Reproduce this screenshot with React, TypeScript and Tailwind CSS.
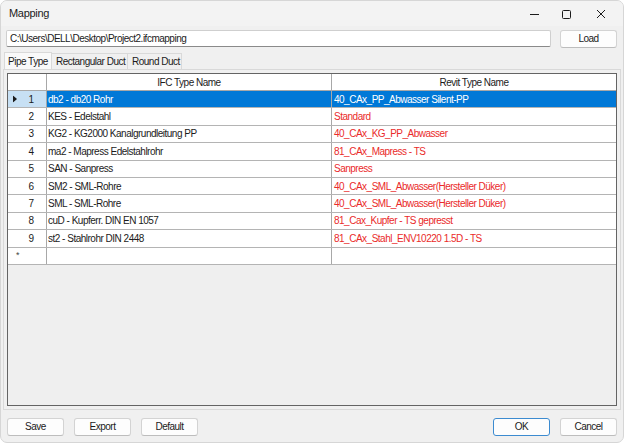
import React from 'react';

const rows = [
  { ifc: 'db2 - db20 Rohr', revit: '40_CAx_PP_Abwasser Silent-PP' },
  { ifc: 'KES - Edelstahl', revit: 'Standard' },
  { ifc: 'KG2 - KG2000 Kanalgrundleitung PP', revit: '40_CAx_KG_PP_Abwasser' },
  { ifc: 'ma2 - Mapress Edelstahlrohr', revit: '81_CAx_Mapress - TS' },
  { ifc: 'SAN - Sanpress', revit: 'Sanpress' },
  { ifc: 'SM2 - SML-Rohre', revit: '40_CAx_SML_Abwasser(Hersteller Düker)' },
  { ifc: 'SML - SML-Rohre', revit: '40_CAx_SML_Abwasser(Hersteller Düker)' },
  { ifc: 'cuD - Kupferr. DIN EN 1057', revit: '81_Cax_Kupfer - TS gepresst' },
  { ifc: 'st2 - Stahlrohr DIN 2448', revit: '81_CAx_Stahl_ENV10220 1.5D - TS' },
];

const Button = ({ label, primary = false }: { label: string; primary?: boolean }) => (
  <button
    className={`block h-[18px] w-[57px] rounded-[3px] border bg-[#fdfdfd] text-[10px] leading-none text-[#1b1b1b] ${
      primary ? 'border-[#3c8bd0]' : 'border-[#d3d3d3] border-b-[#bdbdbd]'
    }`}
  >
    {label}
  </button>
);

const App = () => {
  return (
    <div
      className="w-[624px] h-[444px] bg-white tracking-[-0.5px]"
      style={{ fontFamily: '"Liberation Sans", Arial, sans-serif' }}
    >
      <div className="h-[443px] rounded-[7px] border border-[#d6d6d6] bg-[#f0f0f0] overflow-hidden flex flex-col">
        {/* Title bar */}
        <div className="h-[25px] flex items-center bg-[#f3f3f3] pl-[8px]">
          <span className="text-[11px] text-[#1b1b1b] tracking-[-0.3px]">Mapping</span>
          <div className="ml-auto flex items-center h-full">
            <div className="w-[34px] h-full flex items-center justify-center pl-[4px]">
              <svg width="9" height="10" viewBox="0 0 9 10">
                <line x1="0" y1="5.5" x2="9" y2="5.5" stroke="#1b1b1b" strokeWidth="1" />
              </svg>
            </div>
            <div className="w-[34px] h-full flex items-center justify-center">
              <svg width="10" height="10" viewBox="0 0 10 10">
                <rect x="1.5" y="1.5" width="8" height="8" rx="1" fill="none" stroke="#1b1b1b" strokeWidth="1" />
              </svg>
            </div>
            <div className="w-[40px] h-full flex items-center justify-center pr-[4px]">
              <svg width="10" height="10" viewBox="0 0 10 10">
                <path d="M1 1 L9 9 M9 1 L1 9" stroke="#1b1b1b" strokeWidth="1" />
              </svg>
            </div>
          </div>
        </div>

        {/* Path row */}
        <div className="flex items-start h-[18px] mt-[4px] pl-[5px] pr-[6px]">
          <div className="w-[545px] h-[17px] bg-white border border-[#cfcfcf] border-b-[#8a8a8a] rounded-[2px] flex items-center pl-[3px] text-[10px] text-[#1b1b1b]">
            C:\Users\DELL\Desktop\Project2.ifcmapping
          </div>
          <div className="ml-auto flex">
            <Button label="Load" />
          </div>
        </div>

        {/* Tabs */}
        <div className="flex items-end mt-[4px] pl-[3px] h-[17px] text-[10px] text-[#1b1b1b]">
          <div className="h-[17px] w-[48px] bg-[#f9f9f9] border border-b-0 border-[#d9d9d9] flex items-center pl-[3px]">
            Pipe Type
          </div>
          <div className="h-[16px] w-[76px] border-t border-r border-[#d9d9d9] flex items-center pl-[4px]">
            Rectangular Duct
          </div>
          <div className="h-[16px] w-[54px] border-t border-r border-[#d9d9d9] flex items-center pl-[4px]">
            Round Duct
          </div>
        </div>

        {/* Tab page */}
        <div className="mx-[2px] h-[341px] border border-[#d9d9d9] bg-[#f0f0f0] p-[3px]">
          <div className="h-[333px] border border-[#646464] bg-[#efefef] text-[10px]">
            {/* Header */}
            <div className="flex h-[17px] bg-white border-b border-[#a8a8a8]">
              <div className="w-[39px] border-r border-[#a8a8a8]" />
              <div className="w-[285px] border-r border-[#a8a8a8] flex items-center justify-center text-[#1b1b1b]">
                IFC Type Name
              </div>
              <div className="flex-1 flex items-center justify-center text-[#1b1b1b]">Revit Type Name</div>
            </div>

            {rows.map((r, i) => {
              const sel = i === 0;
              return (
                <div key={i} className="flex h-[17.4px] border-b border-[#b4b4b4]">
                  <div
                    className={`relative w-[39px] border-r border-[#a8a8a8] flex items-center justify-center pl-[8px] text-[#1b1b1b] ${
                      sel ? 'bg-[#c7e0f4]' : 'bg-white'
                    }`}
                  >
                    {sel && (
                      <svg className="absolute left-[5px] top-1/2 -translate-y-1/2" width="4" height="7" viewBox="0 0 4 7">
                        <path d="M0 0 L4 3.5 L0 7 Z" fill="#1b1b1b" />
                      </svg>
                    )}
                    {i + 1}
                  </div>
                  <div
                    className={`w-[285px] border-r border-[#a8a8a8] flex items-center pl-[1px] ${
                      sel ? 'bg-[#0078d7] text-white' : 'bg-white text-[#1b1b1b]'
                    }`}
                  >
                    {r.ifc}
                  </div>
                  <div
                    className={`flex-1 flex items-center pl-[2px] ${
                      sel ? 'bg-[#0078d7] text-white' : 'bg-white text-[#ea2a2a]'
                    }`}
                  >
                    {r.revit}
                  </div>
                </div>
              );
            })}

            {/* New row */}
            <div className="flex h-[17.4px] border-b border-[#b4b4b4]">
              <div className="w-[39px] border-r border-[#a8a8a8] bg-white flex items-center pl-[8px] text-[#444] text-[9px]">
                *
              </div>
              <div className="w-[285px] border-r border-[#a8a8a8] bg-white" />
              <div className="flex-1 bg-white" />
            </div>
          </div>
        </div>

        {/* Bottom buttons */}
        <div className="flex items-center mt-[8px] px-[6px]">
          <div className="flex gap-[10px]">
            <Button label="Save" />
            <Button label="Export" />
            <Button label="Default" />
          </div>
          <div className="ml-auto flex gap-[10px]">
            <Button label="OK" primary />
            <Button label="Cancel" />
          </div>
        </div>
      </div>
    </div>
  );
};

export default App;
